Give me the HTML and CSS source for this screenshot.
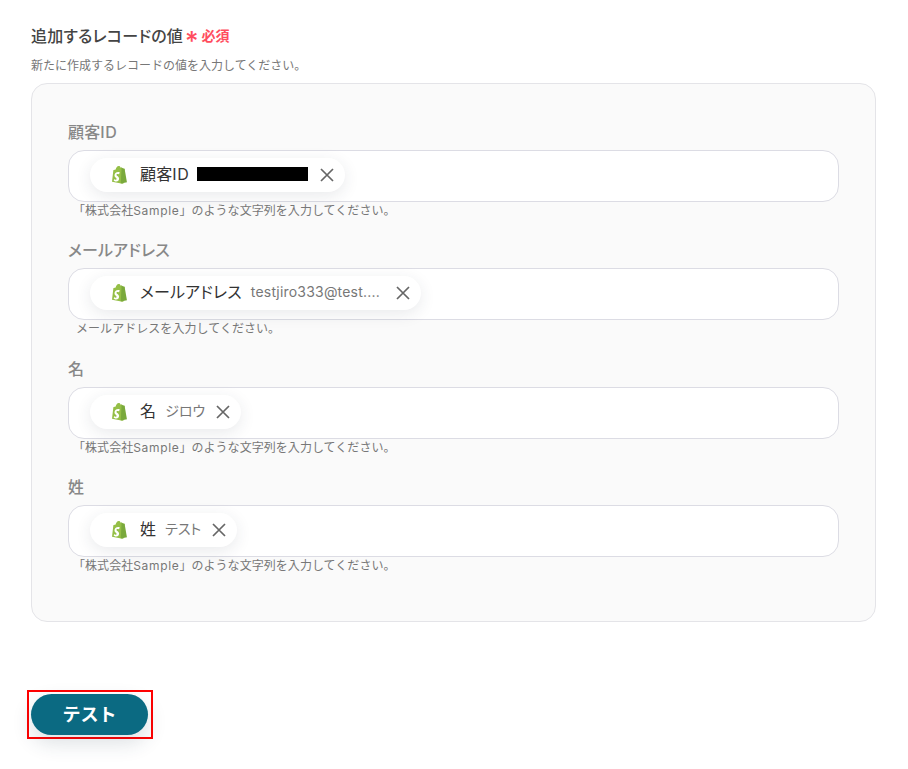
FILE: index.html
```html
<!DOCTYPE html>
<html lang="ja">
<head>
<meta charset="utf-8">
<title>追加するレコードの値</title>
<link rel="stylesheet" href="styles.css">
</head>
<body>
<svg class="defs" width="0" height="0" aria-hidden="true">
  <symbol id="shopify" viewBox="0 0 18 20">
    <path fill="#95bf47" d="M13.6 3.9c0-.1-.1-.2-.2-.2l-1.500-.1-1.200-1.100c-.1-.1-.3-.1-.4 0l-.6.2C9.300 1.700 8.800 1 7.800 1 6 1 5 3.200 4.700 4.400l-1.800.6c-.5.200-.6.200-.6.700L1 16.800l10.600 2 .9-.2L13.600 3.900z"/>
    <path fill="#7aa93c" d="M13.400 3.700l-1.500-.1-1.200-1.100-.1-.1-.8 16.200 6.200-1.300S13.700 4 13.600 3.900c0-.1-.1-.2-.2-.2z"/>
    <path fill="#fff" d="M8.700 7.300l-.6 2s-.7-.3-1.400-.3c-1.200 0-1.200.7-1.200.9 0 1 2.600 1.400 2.600 3.700 0 1.800-1.200 3-2.700 3-1.800 0-2.700-1.100-2.700-1.100l.5-1.600s.9.800 1.700.8c.5 0 .7-.4.700-.7 0-1.300-2.100-1.300-2.100-3.400 0-1.800 1.300-3.500 3.800-3.500 1 0 1.400.2 1.400.2z"/>
  </symbol>
  <symbol id="close" viewBox="0 0 14 14">
    <path d="M1 1l12 12M13 1L1 13" fill="none" stroke="currentColor" stroke-width="1.700"/>
  </symbol>
</svg>
<main class="page">
  <div class="heading">
    <span class="title">追加するレコードの値</span>
    <span class="asterisk">*</span>
    <span class="required">必須</span>
  </div>
  <p class="desc">新たに作成するレコードの値を入力してください。</p>
  <section class="card">
    <div class="field">
      <div class="label">顧客<span class="latin">ID</span></div>
      <div class="input">
        <div class="pill">
          <svg class="logo"><use href="#shopify"/></svg>
          <span class="pill-name">顧客<span class="latin">ID</span></span>
          <span class="redact"></span>
          <svg class="x x-id"><use href="#close"/></svg>
        </div>
      </div>
      <div class="help">「株式会社<span class="latin">Sample</span>」のような文字列を入力してください。</div>
    </div>
    <div class="field">
      <div class="label">メールアドレス</div>
      <div class="input">
        <div class="pill">
          <svg class="logo"><use href="#shopify"/></svg>
          <span class="pill-name">メールアドレス</span>
          <span class="pill-value pill-mail">testjiro333@test....</span>
          <svg class="x x-mail"><use href="#close"/></svg>
        </div>
      </div>
      <div class="help help-mail">メールアドレスを入力してください。</div>
    </div>
    <div class="field">
      <div class="label">名</div>
      <div class="input">
        <div class="pill">
          <svg class="logo"><use href="#shopify"/></svg>
          <span class="pill-name">名</span>
          <span class="pill-value">ジロウ</span>
          <svg class="x"><use href="#close"/></svg>
        </div>
      </div>
      <div class="help">「株式会社<span class="latin">Sample</span>」のような文字列を入力してください。</div>
    </div>
    <div class="field">
      <div class="label">姓</div>
      <div class="input">
        <div class="pill">
          <svg class="logo"><use href="#shopify"/></svg>
          <span class="pill-name">姓</span>
          <span class="pill-value">テスト</span>
          <svg class="x"><use href="#close"/></svg>
        </div>
      </div>
      <div class="help">「株式会社<span class="latin">Sample</span>」のような文字列を入力してください。</div>
    </div>
  </section>
  <div class="actions">
    <div class="highlight">
      <button class="test" type="button">テスト</button>
    </div>
  </div>
</main>
</body>
</html>
```

FILE: styles.css
```css
* { box-sizing: border-box; }
html, body { margin: 0; padding: 0; background: #fff; }
body {
  font-family: Inter, "Noto Sans CJK JP", "Noto Sans", sans-serif;
  color: #2f2f2f;
  height: 769px;
  overflow: hidden;
}
.defs { position: absolute; }
.page { width: 908px; padding: 25px 32px 0 31px; }
.latin { letter-spacing: .65px; }
.heading { display: flex; align-items: center; height: 22px; }
.title { font-size: 16px; font-weight: 500; line-height: 22px; color: #444; font-feature-settings: "palt"; letter-spacing: .2px; }
.asterisk {
  color: #ff4d5e; font-size: 26px; font-weight: 500; line-height: 22px;
  height: 22px; margin-left: 2px; padding-top: 5px;
}
.required { color: #ff4d5e; font-size: 14px; font-weight: 700; margin-left: 3px; line-height: 22px; font-feature-settings: "palt"; }
.desc { margin: 10px 0 0; font-size: 12px; line-height: 18px; color: #777; }
.card {
  margin-top: 8px; height: 539px; width: 845px;
  background: #fafafa; border: 1px solid #e4e4e8; border-radius: 16px;
  padding: 37px 36px 0;
  display: flex; flex-direction: column; gap: 20.300px;
}
.label { font-size: 16px; font-weight: 500; line-height: 22px; color: #888; height: 22px; font-feature-settings: "palt"; letter-spacing: .15px; }
.input {
  margin-top: 7px; height: 52px;
  background: #fff; border: 1px solid #dcdce4; border-radius: 16px;
  padding: 7px 21px;
}
.pill {
  display: inline-flex; align-items: center; height: 34px;
  background: #fff; border-radius: 17px; padding: 0 11px 0 21px;
  box-shadow: 0 4px 16px rgba(40, 50, 70, .1);
}
.logo { width: 18px; height: 20px; flex: none; }
.pill-name {
  margin: 0 0 2px 11px; font-size: 16px; color: #333; line-height: 20px;
  white-space: nowrap; font-feature-settings: "palt"; letter-spacing: .15px;
}
.pill-value {
  margin: 0 0 2px 9px; font-size: 14px; color: #777; line-height: 20px;
  white-space: nowrap; font-feature-settings: "palt";
}
.pill-mail { letter-spacing: .2px; }
.redact { display: block; margin: 0 0 2px 8px; width: 111px; height: 14px; background: #000; }
.x { width: 14px; height: 14px; margin-left: 11px; color: #666; flex: none; }
.x-id { margin-left: 12px; }
.x-mail { margin-left: 16px; }
.help { padding-left: 5px; font-size: 12px; line-height: 17px; color: #777; white-space: nowrap; letter-spacing: .05px; }
.help-mail { padding-left: 8px; }
.actions { margin-top: 68px; }
.highlight {
  display: inline-block; margin-left: -4px; padding: 2px;
  border: 2px solid #f00;
  width: 126px; height: 49px;
}
.test {
  display: block; width: 117px; height: 41px; padding: 0 0 3px;
  background: #0b6a82; color: #fff; border: 0; border-radius: 21px;
  font-family: inherit; font-size: 18px; font-weight: 700;
  box-shadow: 0 8px 20px rgba(40, 60, 80, .16);
}
```
